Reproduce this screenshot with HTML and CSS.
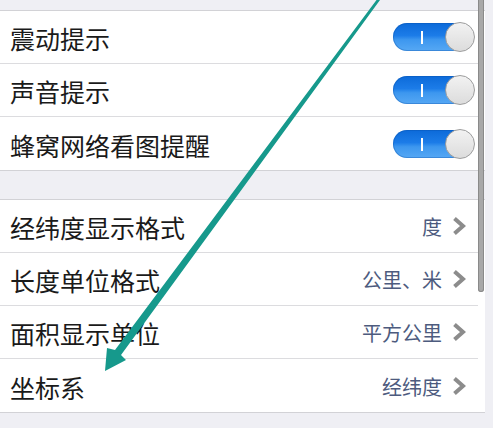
FILE: index.html
```html
<!DOCTYPE html>
<html lang="zh">
<head>
<meta charset="utf-8">
<link rel="stylesheet" href="styles.css">
</head>
<body>
<div class="page">
  <div class="group group-first">
    <div class="row"><span class="label">震动提示</span><span class="switch"><span class="mark"></span><span class="knob"></span></span></div>
    <div class="row"><span class="label">声音提示</span><span class="switch"><span class="mark"></span><span class="knob"></span></span></div>
    <div class="row last"><span class="label">蜂窝网络看图提醒</span><span class="switch"><span class="mark"></span><span class="knob"></span></span></div>
  </div>
  <div class="group group-second">
    <div class="row"><span class="label">经纬度显示格式</span><span class="value">度</span><svg class="chev" width="14" height="18" viewBox="0 0 14 18"><polyline points="2.5,1.5 11,9 2.5,16.5" fill="none" stroke="#8c8c8c" stroke-width="4" stroke-linejoin="miter" stroke-linecap="butt"/></svg></div>
    <div class="row"><span class="label">长度单位格式</span><span class="value">公里、米</span><svg class="chev" width="14" height="18" viewBox="0 0 14 18"><polyline points="2.5,1.5 11,9 2.5,16.5" fill="none" stroke="#8c8c8c" stroke-width="4" stroke-linejoin="miter" stroke-linecap="butt"/></svg></div>
    <div class="row"><span class="label">面积显示单位</span><span class="value">平方公里</span><svg class="chev" width="14" height="18" viewBox="0 0 14 18"><polyline points="2.5,1.5 11,9 2.5,16.5" fill="none" stroke="#8c8c8c" stroke-width="4" stroke-linejoin="miter" stroke-linecap="butt"/></svg></div>
    <div class="row last"><span class="label">坐标系</span><span class="value">经纬度</span><svg class="chev" width="14" height="18" viewBox="0 0 14 18"><polyline points="2.5,1.5 11,9 2.5,16.5" fill="none" stroke="#8c8c8c" stroke-width="4" stroke-linejoin="miter" stroke-linecap="butt"/></svg></div>
  </div>
  <div class="scrollbar"></div>
  <svg class="arrow" width="493" height="428" viewBox="0 0 493 428">
    <polygon points="376.5,0 380,0 121,355 126,360 105,371 107,348 115,350" fill="#16998c"/>
  </svg>
</div>
</body>
</html>
```

FILE: styles.css
```css
html, body {
  margin: 0;
  padding: 0;
}
body {
  background: #efeff4;
  font-family: "Noto Sans CJK SC", "Noto Sans", sans-serif;
  width: 493px;
  height: 428px;
  overflow: hidden;
}
.page {
  position: relative;
  width: 493px;
  height: 428px;
  padding-top: 10px;
  box-sizing: border-box;
}
.group {
  width: 485px;
  background: #ffffff;
  border-top: 1px solid #d2d2d6;
  border-bottom: 1px solid #d2d2d6;
  padding-right: 7px;
  box-sizing: border-box;
}
.group-second {
  margin-top: 28px;
}
.row {
  display: flex;
  align-items: center;
  height: 52px;
  border-bottom: 1px solid #dcdcdf;
  padding-left: 10px;
  padding-right: 4px;
}
.row.last {
  border-bottom: none;
  height: 53px;
}
.label {
  flex: 1;
  font-size: 25px;
  color: #1a1a1a;
  line-height: 1;
  padding-top: 3px;
}
.value {
  font-size: 20px;
  color: #4d5b7e;
  line-height: 1;
  padding-top: 2px;
}
.chev {
  margin-left: 10px;
  margin-right: 8px;
}
.switch {
  position: relative;
  width: 81px;
  height: 28px;
  border-radius: 14px;
  background: linear-gradient(to bottom, #0c6ad9 0%, #1c7ce8 45%, #3d97ef 60%, #56a8f4 100%);
  box-shadow: inset 0 0 0 1px rgba(10, 80, 170, 0.35);
}
.mark {
  position: absolute;
  left: 28px;
  top: 8px;
  width: 2px;
  height: 13px;
  background: #ffffff;
}
.knob {
  position: absolute;
  right: -1px;
  top: -1px;
  width: 28px;
  height: 28px;
  border-radius: 50%;
  background: linear-gradient(to bottom, #f2f2f2, #dcdcdc);
  border: 1px solid #9d9d9d;
}
.scrollbar {
  position: absolute;
  left: 478px;
  top: -6px;
  width: 6px;
  height: 298px;
  border-radius: 3px;
  background: #a8a8a8;
  box-shadow: inset 0 0 0 1px #8a8a8a;
}
.arrow {
  position: absolute;
  left: 0;
  top: 0;
}
```
